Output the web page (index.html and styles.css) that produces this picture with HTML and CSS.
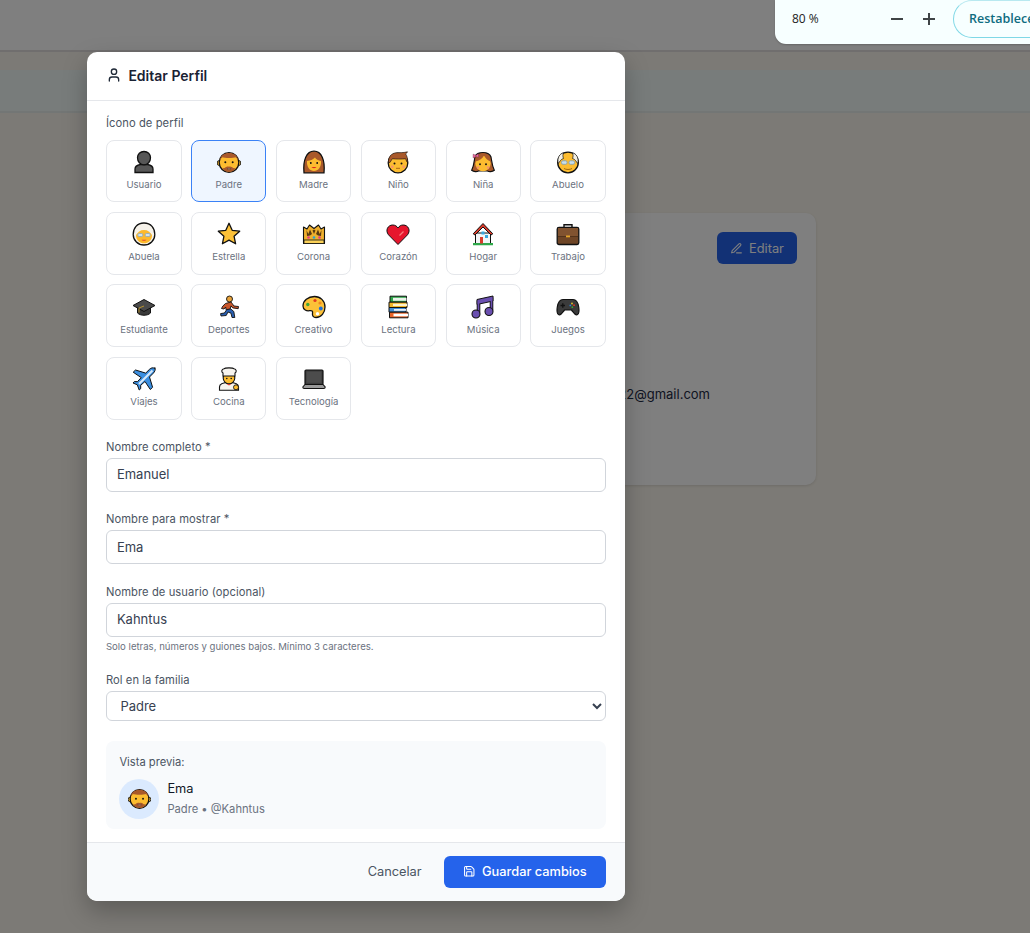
FILE: index.html
```html
<!DOCTYPE html>
<html lang="es">
<head>
<meta charset="utf-8">
<title>Editar Perfil</title>
<link rel="stylesheet" href="styles.css">
</head>
<body>
<svg class="defs" width="0" height="0" aria-hidden="true">
  <symbol id="e-usuario" viewBox="0 0 24 24"><path d="M3 22.500v-3.500c0-2.500 2.500-4 5.500-4.500h7c3 .5 5.500 2 5.500 4.500v3.500z" fill="#575757" stroke="#111" stroke-width="1.300"/><path d="M12 1.500c3.800 0 6.500 2.700 6.500 6.300 0 3.800-2.700 7-6.500 7s-6.500-3.200-6.500-7c0-3.600 2.700-6.300 6.500-6.300z" fill="#575757" stroke="#111" stroke-width="1.300"/></symbol>
  <symbol id="e-padre" viewBox="0 0 24 24"><path d="M2.200 10.500a2 2.500 0 0 0 0 5h19.600a2 2.500 0 0 0 0-5z" fill="#fcbc30" stroke="#111" stroke-width=".9"/><circle cx="12" cy="12.500" r="9.800" fill="#fcbc30" stroke="#111" stroke-width="1.300"/><path d="M2.800 10C3.600 5.300 7 2.900 12 2.900s8.400 2.400 9.200 7.100c-.8-.4-1.300-1.300-1.900-2.700-3.700 1-10.900 1-14.600 0-.6 1.400-1.100 2.300-1.900 2.700z" fill="#a9592b"/><path d="M5.200 18c1.600 2.700 3.900 3.900 6.800 3.900s5.200-1.200 6.800-3.900c-.8.200-1.600.2-2.500 0-1.500-1.300-2.800-1.800-4.300-1.300-1.500-.5-2.800 0-4.300 1.300-.9.200-1.700.2-2.500 0z" fill="#a9592b"/><path d="M10 18.500h4c-.5 1.100-3.500 1.100-4 0z" fill="#f4f4f4" stroke="#3a1a0a" stroke-width=".4"/><circle cx="8.300" cy="12.300" r="1" fill="#111"/><circle cx="15.700" cy="12.300" r="1" fill="#111"/></symbol>
  <symbol id="e-madre" viewBox="0 0 24 24"><path d="M2 22.800C.8 10 4.500 1.200 12 1.200S23.200 10 22 22.800z" fill="#a9592b" stroke="#111" stroke-width="1.300"/><path d="M5 11c3.200-.3 6.300-1.500 8-3.500 1 1.800 3.300 3.200 6 3.500.5 6-2.800 10-7 10S4.500 17 5 11z" fill="#fcbc30"/><path d="M9.600 17h4.800c-.5 1.500-4.300 1.500-4.800 0z" fill="#e0241c"/><circle cx="8.800" cy="13" r=".95" fill="#111"/><circle cx="15.200" cy="13" r=".95" fill="#111"/></symbol>
  <symbol id="e-nino" viewBox="0 0 24 24"><circle cx="12" cy="13" r="9.800" fill="#fcbc30" stroke="#111" stroke-width="1.300"/><path d="M2.400 12.500C2.200 6.800 5.500 3.200 10 2.800c3.500-.3 7 .2 11.500-1-.6 1-1 1.700-1.800 2.200 1.500 2 2.100 5 2 8.500-1-.5-1.500-2.400-2.200-3.800-3.500.5-10 .4-13.200 0-1 1.300-1.500 3-2.400 3.800z" fill="#a9592b" stroke="#111" stroke-width=".6"/><circle cx="8.500" cy="13.500" r="1" fill="#111"/><circle cx="15.500" cy="13.500" r="1" fill="#111"/><path d="M10 18.300h4" stroke="#a8671a" stroke-width="1"/><circle cx="6.200" cy="16.800" r="1.400" fill="#f7956a"/><circle cx="17.800" cy="16.800" r="1.400" fill="#f7956a"/></symbol>
  <symbol id="e-nina" viewBox="0 0 24 24"><path d="M4 6.500C6 1.500 18 1 20 7c.8 4.500 1 8.500 3.300 13.300-2 1.700-5.300 1.700-6.800.7h-9c-1.500 1-4.800 1-6.800-.7C3 15.500 3.200 11 4 6.500z" fill="#a9592b" stroke="#111" stroke-width="1.200"/><circle cx="12" cy="13.500" r="7.700" fill="#fcbc30"/><path d="M4.300 11.500c3.500-.5 7.200-2.800 8.700-6 1.500 2.800 3.700 5.200 6.700 6-.3-5-3.500-8.500-7.700-8.500S4.300 6.500 4.300 11.500z" fill="#a9592b"/><circle cx="9" cy="14.300" r=".95" fill="#111"/><circle cx="15" cy="14.300" r=".95" fill="#111"/><path d="M2.200 4.200l2.800 1.200 2.300-1.700.4 3.600-2.700-.7-2.800 1.300z" fill="#f06ba0" stroke="#7a2a50" stroke-width=".5"/><circle cx="7" cy="17.500" r="1.300" fill="#f7956a"/><circle cx="17" cy="17.500" r="1.300" fill="#f7956a"/></symbol>
  <symbol id="e-abuelo" viewBox="0 0 24 24"><circle cx="12" cy="12.500" r="10.300" fill="#fcbc30" stroke="#111" stroke-width="1.300"/><path d="M2.300 13.500C.8 8 3.800 3.500 7.500 2.800c-.8 2-.8 3.700 0 5.700-2.500.5-3.700 3-5.200 5zM21.700 13.500c1.500-5.500-1.500-10-5.200-10.700.8 2 .8 3.700 0 5.700 2.500.5 3.700 3 5.200 5z" fill="#f3efe4" stroke="#111" stroke-width=".7"/><rect x="5.500" y="10.800" width="5.500" height="3.500" rx="1.400" fill="#c9dfec" stroke="#7d9cb2" stroke-width=".8"/><rect x="13" y="10.800" width="5.500" height="3.500" rx="1.400" fill="#c9dfec" stroke="#7d9cb2" stroke-width=".8"/><path d="M8 18.500c2 1.300 6 1.300 8 0" fill="none" stroke="#a06a10" stroke-width="1"/></symbol>
  <symbol id="e-abuela" viewBox="0 0 24 24"><path d="M12 1C5 1 1.200 6 1.200 12.500c0 6 4.800 10.500 10.800 10.500s10.800-4.500 10.800-10.500C22.800 6 19 1 12 1z" fill="#f6f2ea" stroke="#111" stroke-width="1.300"/><path d="M4 13c2-3 4-5 8-5s6 2 8 5c.3 5-3.600 8.300-8 8.300S3.700 18 4 13z" fill="#fdb92c"/><rect x="5.800" y="11.500" width="5" height="3" rx="1.300" fill="#d3e2ea" stroke="#8aa7ba" stroke-width=".8"/><rect x="13.200" y="11.500" width="5" height="3" rx="1.300" fill="#d3e2ea" stroke="#8aa7ba" stroke-width=".8"/><path d="M9.600 17.800h4.800c-.5 1.400-4.300 1.400-4.800 0z" fill="#e5482c"/></symbol>
  <symbol id="e-estrella" viewBox="0 0 24 24"><path d="M12 1.300l3.200 7 7.500.9-5.600 5.100 1.500 7.500-6.600-3.700-6.600 3.700 1.500-7.500-5.600-5.100 7.500-.9z" fill="#fcc138" stroke="#111" stroke-width="1.300" stroke-linejoin="round"/></symbol>
  <symbol id="e-corona" viewBox="0 0 24 24"><path d="M1.500 5l3.500 2L7.500 3 12 6.500 16.500 3 19 7l3.500-2v16.500h-21z" fill="#efb02e" stroke="#111" stroke-width="1.100" stroke-linejoin="round"/><path d="M4.500 8l1.800 4L8 7.500l2 4.500-2 1.500-3 .5zM19.500 8l-1.800 4L16 7.500 14 12l2 1.500 3 .5zM10.500 8.500L12 12l1.500-3.500L12 7.500z" fill="#5a3a10"/><path d="M2 18h20v3.500H2z" fill="#fbd158" stroke="#111" stroke-width=".8"/><circle cx="6.500" cy="15.500" r="1.300" fill="#e23a8a"/><circle cx="12" cy="15.500" r="1.300" fill="#22a5d8"/><circle cx="17.500" cy="15.500" r="1.300" fill="#e23a8a"/></symbol>
  <symbol id="e-corazon" viewBox="0 0 24 24"><path d="M12 22.500L2.500 12.800C-1 8.500 1.800 3 6.700 3c2.400 0 4.200 1.200 5.300 3 1.100-1.800 2.900-3 5.300-3 4.900 0 7.700 5.500 4.200 9.800z" fill="#e6162d" stroke="#111" stroke-width="1"/><path d="M13.500 13.500l4-4" stroke="#f77a7a" stroke-width="1.300" fill="none"/></symbol>
  <symbol id="e-hogar" viewBox="0 0 24 24"><path d="M4.500 11h15v10.500h-15z" fill="#f3f5f7" stroke="#111" stroke-width="1"/><path d="M12 1.500L2.200 11.800l1.800 1.200L12 5l8 8 1.800-1.200z" fill="#d83a2a" stroke="#111" stroke-width="1" stroke-linejoin="round"/><path d="M2 21h20v2.300H2z" fill="#2fa84a"/><rect x="9" y="15" width="3" height="6.500" fill="#d83a2a"/><rect x="14" y="13" width="3" height="3" fill="#37a7e0"/><rect x="10.500" y="9.500" width="3" height="3" fill="#37a7e0"/></symbol>
  <symbol id="e-trabajo" viewBox="0 0 24 24"><path d="M8 6V2.800h8V6" fill="none" stroke="#111" stroke-width="1.400"/><rect x="1.200" y="5.500" width="21.600" height="17" rx="1.800" fill="#6e4526" stroke="#111" stroke-width="1.300"/><path d="M2 6h20v8H2z" fill="#815330"/><path d="M2 14.500h20" stroke="#4d2f18" stroke-width=".8"/><rect x="10" y="13.500" width="4" height="1.800" fill="#e5a52a"/></symbol>
  <symbol id="e-estudiante" viewBox="0 0 24 24"><path d="M5.500 12v6c3 3 10 3 13 0v-6z" fill="#3a3a3a" stroke="#111" stroke-width="1"/><path d="M12 4.500L1 10.500 12 16.500l11-6z" fill="#4a4a4a" stroke="#111" stroke-width="1" stroke-linejoin="round"/><path d="M12 11l-5 2v4.500" fill="none" stroke="#c49a2a" stroke-width=".9"/></symbol>
  <symbol id="e-deportes" viewBox="0 0 24 24"><circle cx="12.500" cy="4" r="3" fill="#e8a23a" stroke="#111" stroke-width=".9"/><path d="M8.500 8.500l5.500-1.500 3 4 4.500.5-.3 2.200-5.500-.8-1.700-2-1 3.500-4 .3-.3-2.700-1.700 2-2.500-.5 1.300-2.400z" fill="#c9562a" stroke="#111" stroke-width=".9" stroke-linejoin="round"/><path d="M9.800 14.500l4-.5 3 2.500 1 6h-2.800l-1-4.300-3-1.200-1.800 3.500-5.200.5-.4-2.400 3.800-.6z" fill="#2a5fb0" stroke="#111" stroke-width=".9" stroke-linejoin="round"/></symbol>
  <symbol id="e-creativo" viewBox="0 0 24 24"><path d="M12.500 1.500C6 1.500 1 5.800 1 11c0 4 3.800 5.200 6.500 4.700 2.500-.4 3.500.5 3 2.500-.5 2.800 1 4.300 3.500 4.300 5.300 0 9-4.800 9-10.500 0-6.300-4.700-10.500-10.500-10.500z" fill="#fcc138" stroke="#111" stroke-width="1.300"/><circle cx="13" cy="5.500" r="1.600" fill="#e53a20"/><circle cx="18" cy="8" r="1.600" fill="#f08a1c"/><circle cx="5.800" cy="9.500" r="1.700" fill="#3fa535"/><circle cx="18.800" cy="13.500" r="1.900" fill="#1f6fd8"/><circle cx="15.500" cy="18.700" r="1.700" fill="#fff"/></symbol>
  <symbol id="e-lectura" viewBox="0 0 24 24"><path d="M4 1.200h16.500v6H4z" fill="#2fa84a" stroke="#111" stroke-width="1"/><path d="M7 2.800h13.500v3H7z" fill="#eaf3ea"/><path d="M3 7.200h18v5.300H3z" fill="#f0b528" stroke="#111" stroke-width="1"/><path d="M7 8.800h14v2.200H7z" fill="#fdf2cc"/><path d="M3 12.500h17v4.700H3z" fill="#3f8fd8" stroke="#111" stroke-width="1"/><path d="M8 14h12v1.800H8z" fill="#e8f1fa"/><path d="M3.500 17.200h18.500v5.600H3.500z" fill="#e8642a" stroke="#111" stroke-width="1"/><path d="M7.500 18.700H22v2.600H7.500z" fill="#fff"/></symbol>
  <symbol id="e-musica" viewBox="0 0 24 24"><path d="M7.500 5.500v12M20.500 2.500v13" stroke="#111" stroke-width="3.600" fill="none"/><path d="M6 4.500L22 1v5L6 9.500z" fill="#6a4fb0" stroke="#111" stroke-width="1"/><path d="M7.500 5.500v12M20.500 2.500v13" stroke="#6a4fb0" stroke-width="1.700" fill="none"/><circle cx="5" cy="19" r="4" fill="#6a4fb0" stroke="#111" stroke-width="1.100"/><circle cx="18" cy="16.500" r="4" fill="#6a4fb0" stroke="#111" stroke-width="1.100"/></symbol>
  <symbol id="e-juegos" viewBox="0 0 24 24"><path d="M7 4.500h10c3.300 0 5 3.200 5.700 7.500.6 4 .5 7.300-1.900 7.800-2.100.4-3.600-2.800-5.300-4.800h-7c-1.700 2-3.200 5.200-5.300 4.800C.8 19.300.7 16 1.300 12 2 7.700 3.700 4.500 7 4.500z" fill="#3b3b3b" stroke="#111" stroke-width="1.200"/><path d="M4.500 10.500h4.500M6.800 8.300v4.500" stroke="#111" stroke-width="1.300"/><circle cx="16" cy="8.500" r=".9" fill="#e5c12a"/><circle cx="18" cy="10.200" r=".9" fill="#e53a20"/><circle cx="14.300" cy="10.400" r=".9" fill="#2a7fd8"/><circle cx="16.300" cy="12.200" r=".9" fill="#3fa535"/></symbol>
  <symbol id="e-viajes" viewBox="0 0 24 24"><path d="M22.800 1.500c-1.500-1.200-3.800-.7-5.300.8l-3.800 3.800L3.500 3 1.200 5.200l8 5.400-3.700 4H2.300L1 16l4.300 1.800L7.200 23l1.500-1.300v-3.400l4.300-3.800 5.300 8 2.300-2.200-3.100-10.300 3.800-3.800c1.500-1.500 2.500-3.700 1.500-5.700z" fill="#3a8ee0" stroke="#111" stroke-width="1" stroke-linejoin="round"/><path d="M20.500 3.500L7 17" stroke="#d6e9fa" stroke-width="2.200"/></symbol>
  <symbol id="e-cocina" viewBox="0 0 24 24"><path d="M2.500 23.300V20c0-3 3.500-4.500 9.500-4.500s9.500 1.500 9.500 4.500v3.300z" fill="#f7f4ee" stroke="#111" stroke-width="1.100"/><circle cx="12" cy="11" r="5.800" fill="#fcbc30" stroke="#111" stroke-width="1.100"/><path d="M6 9V6C4 5.200 4.500 2 7 1.800c1-1.300 9-1.300 10 0C19.500 2 20 5.200 18 6v3z" fill="#f7f4ee" stroke="#111" stroke-width="1.100"/><path d="M9.500 17l2.500 1.500 2.500-1.500z" fill="#d83a2a"/><circle cx="19" cy="20.300" r="2.500" fill="#fcbc30" stroke="#111" stroke-width=".9"/><circle cx="9.800" cy="11.500" r=".8" fill="#111"/><circle cx="14.200" cy="11.500" r=".8" fill="#111"/></symbol>
  <symbol id="e-tecnologia" viewBox="0 0 24 24"><rect x="3" y="3" width="18" height="14.500" rx="1" fill="#3c3c3c" stroke="#111" stroke-width="1.200"/><rect x="4.600" y="4.600" width="14.800" height="11.200" fill="#4c4c4c"/><path d="M.8 20L3 17.500h18l2.200 2.500c0 1-.5 1.500-1.500 1.500H2.300C1.300 21.500.8 21 .8 20z" fill="#9a9a9a" stroke="#111" stroke-width="1.100"/></symbol>
</svg>

<header class="topbar"></header>
<main class="page">
  <div class="band"></div>
  <section class="card">
    <div class="card-head">
      <button class="edit-btn" type="button">
        <svg class="edit-icon" viewBox="0 0 24 24"><path d="M12 20h9"/><path d="M16.500 3.500a2.120 2.120 0 0 1 3 3L7 19l-4 1 1-4z"/></svg>
        Editar
      </button>
    </div>
    <p class="card-mail">emanuel.kahn22@gmail.com</p>
  </section>
</main>

<div class="overlay"></div>

<aside class="zoom-bubble">
  <span class="zoom-value">80 %</span>
  <span class="zoom-actions">
    <svg class="zoom-icon" viewBox="0 0 14 14"><path d="M1 7h12"/></svg>
    <svg class="zoom-icon" viewBox="0 0 14 14"><path d="M1 7h12M7 1v12"/></svg>
  </span>
  <span class="zoom-reset">Restablecer</span>
</aside>

<div class="modal">
  <div class="modal-head">
    <svg class="head-icon" viewBox="0 0 24 24"><path d="M19 21v-2a4 4 0 0 0-4-4H9a4 4 0 0 0-4 4v2"/><circle cx="12" cy="7" r="4"/></svg>
    <h2 class="modal-title">Editar Perfil</h2>
  </div>
  <form class="modal-body">
    <div class="label label-icons">Ícono de perfil</div>
    <div class="icon-grid">
      <div class="tile"><svg class="emoji"><use href="#e-usuario"/></svg><span>Usuario</span></div>
      <div class="tile tile-active"><svg class="emoji"><use href="#e-padre"/></svg><span>Padre</span></div>
      <div class="tile"><svg class="emoji"><use href="#e-madre"/></svg><span>Madre</span></div>
      <div class="tile"><svg class="emoji"><use href="#e-nino"/></svg><span>Niño</span></div>
      <div class="tile"><svg class="emoji"><use href="#e-nina"/></svg><span>Niña</span></div>
      <div class="tile"><svg class="emoji"><use href="#e-abuelo"/></svg><span>Abuelo</span></div>
      <div class="tile"><svg class="emoji"><use href="#e-abuela"/></svg><span>Abuela</span></div>
      <div class="tile"><svg class="emoji"><use href="#e-estrella"/></svg><span>Estrella</span></div>
      <div class="tile"><svg class="emoji"><use href="#e-corona"/></svg><span>Corona</span></div>
      <div class="tile"><svg class="emoji"><use href="#e-corazon"/></svg><span>Corazón</span></div>
      <div class="tile"><svg class="emoji"><use href="#e-hogar"/></svg><span>Hogar</span></div>
      <div class="tile"><svg class="emoji"><use href="#e-trabajo"/></svg><span>Trabajo</span></div>
      <div class="tile"><svg class="emoji"><use href="#e-estudiante"/></svg><span>Estudiante</span></div>
      <div class="tile"><svg class="emoji"><use href="#e-deportes"/></svg><span>Deportes</span></div>
      <div class="tile"><svg class="emoji"><use href="#e-creativo"/></svg><span>Creativo</span></div>
      <div class="tile"><svg class="emoji"><use href="#e-lectura"/></svg><span>Lectura</span></div>
      <div class="tile"><svg class="emoji"><use href="#e-musica"/></svg><span>Música</span></div>
      <div class="tile"><svg class="emoji"><use href="#e-juegos"/></svg><span>Juegos</span></div>
      <div class="tile"><svg class="emoji"><use href="#e-viajes"/></svg><span>Viajes</span></div>
      <div class="tile"><svg class="emoji"><use href="#e-cocina"/></svg><span>Cocina</span></div>
      <div class="tile"><svg class="emoji"><use href="#e-tecnologia"/></svg><span>Tecnología</span></div>
    </div>

    <label class="field">
      <span class="label">Nombre completo *</span>
      <input class="input" type="text" value="Emanuel">
    </label>
    <label class="field">
      <span class="label">Nombre para mostrar *</span>
      <input class="input" type="text" value="Ema">
    </label>
    <label class="field">
      <span class="label">Nombre de usuario (opcional)</span>
      <input class="input" type="text" value="Kahntus">
      <span class="help">Solo letras, números y guiones bajos. Mínimo 3 caracteres.</span>
    </label>
    <label class="field">
      <span class="label">Rol en la familia</span>
      <select class="select"><option>Padre</option></select>
    </label>

    <div class="preview">
      <div class="preview-title">Vista previa:</div>
      <div class="preview-row">
        <div class="avatar"><svg class="avatar-emoji"><use href="#e-padre"/></svg></div>
        <div class="preview-text">
          <div class="preview-name">Ema</div>
          <div class="preview-sub">Padre • @Kahntus</div>
        </div>
      </div>
    </div>
  </form>
  <div class="modal-foot">
    <button class="btn-cancel" type="button">Cancelar</button>
    <button class="btn-save" type="button">
      <svg class="save-icon" viewBox="0 0 24 24"><path d="M15.200 3a2 2 0 0 1 1.400.6l3.800 3.800a2 2 0 0 1 .6 1.400V19a2 2 0 0 1-2 2H5a2 2 0 0 1-2-2V5a2 2 0 0 1 2-2z"/><path d="M17 21v-7a1 1 0 0 0-1-1H8a1 1 0 0 0-1 1v7"/><path d="M7 3v4a1 1 0 0 0 1 1h7"/></svg>
      Guardar cambios
    </button>
  </div>
</div>
</body>
</html>
```

FILE: styles.css
```css
* { box-sizing: border-box; }
html, body { margin: 0; height: 933px; overflow: hidden; }
body {
  background: #f9f5ec;
  font-family: Inter, "Liberation Sans", sans-serif;
  color: #111827;
  position: relative;
}
.defs { position: absolute; }

.topbar {
  height: 52px;
  background: #ffffff;
  border-bottom: 2px solid #e0dcdc;
}
.page { padding-top: 18px; }
.band { height: 43px; background: #f0f8f7; border-bottom: 2px solid #e6ecea; }
.card {
  width: 602px;
  height: 272px;
  margin: 100px 0 0 214px;
  padding: 19px;
  background: #ffffff;
  border-radius: 10px;
  box-shadow: 0 1px 3px rgba(0, 0, 0, .12);
}
.card-head { display: flex; justify-content: flex-end; }
.edit-btn {
  width: 80px;
  height: 32px;
  border: 0;
  border-radius: 6px;
  background: #2563eb;
  color: #fff;
  font: 400 12.800px Inter, sans-serif;
  display: flex;
  align-items: center;
  justify-content: center;
  gap: 6px;
}
.edit-icon { width: 13px; height: 13px; fill: none; stroke: #fff; stroke-width: 2; stroke-linecap: round; stroke-linejoin: round; }
.card-mail {
  margin: 122px 87px 0 0;
  text-align: right;
  font-size: 13px;
  line-height: 16px;
  color: #1e2a44;
}

.overlay { position: absolute; inset: 0; background: rgba(0, 0, 0, .5); }

.zoom-bubble {
  position: absolute;
  top: 0;
  left: 775px;
  width: 300px;
  height: 44px;
  background: #f7ffff;
  border-bottom-left-radius: 11px;
  display: flex;
  align-items: flex-start;
  font-family: "Open Sans", sans-serif;
  box-shadow: 0 1px 2px rgba(0, 0, 0, .2);
}
.zoom-value { margin: 11px 0 0 17px; width: 98px; font-size: 12px; line-height: 16px; color: #222; }
.zoom-actions { display: flex; gap: 18px; margin-top: 12px; }
.zoom-icon { width: 14px; height: 14px; fill: none; stroke: #3f4446; stroke-width: 2; }
.zoom-reset {
  margin: 0 0 0 17px;
  height: 38px;
  width: 120px;
  padding-left: 15px;
  border: 1px solid #7fd8e6;
  border-top-color: #b8e9f0;
  border-radius: 19px;
  font-size: 12.500px;
  font-weight: 600;
  line-height: 36px;
  color: #0f6c80;
}

.modal {
  position: absolute;
  left: 87.200px;
  top: 52px;
  width: 537.600px;
  height: 849px;
  background: #fff;
  border-radius: 10px;
  overflow: hidden;
  box-shadow: 0 10px 25px rgba(0, 0, 0, .25);
  display: flex;
  flex-direction: column;
}
.modal-head {
  height: 49px;
  padding: 0 19.200px 2px;
  border-bottom: 1px solid #e5e7eb;
  display: flex;
  align-items: center;
  gap: 6px;
}
.head-icon { width: 16px; height: 16px; fill: none; stroke: #1f2937; stroke-width: 2; stroke-linecap: round; stroke-linejoin: round; }
.modal-title { margin: 0; font-size: 14px; font-weight: 600; color: #1a2233; }

.modal-body { flex: 1; padding: 14.500px 19.200px 0; }
.label { display: block; margin-left: -.5px; font-size: 11.200px; line-height: 14px; font-weight: 400; letter-spacing: .08px; color: #4b5563; margin-bottom: 4px; }
.label-icons { margin-bottom: 10px; }

.icon-grid {
  display: grid;
  grid-template-columns: repeat(6, 1fr);
  grid-auto-rows: 62.600px;
  gap: 9.900px 9.600px;
}
.tile {
  border: 1px solid #e5e7eb;
  border-radius: 8px;
  background: #fff;
  display: flex;
  flex-direction: column;
  align-items: center;
  padding-top: 9.200px;
  font-size: 9.600px;
  line-height: 12px;
  color: #6b7280;
}
.tile-active { background: #eff6ff; border-color: #3b82f6; }
.emoji { width: 24px; height: 24px; margin-bottom: 5px; display: block; }

.field { display: block; margin-top: 20.400px; }
.input {
  display: block;
  width: 100%;
  height: 34px;
  padding: 0 9.500px 1.500px;
  border: 1px solid #d1d5db;
  border-radius: 6px;
  font: 400 13px Inter, sans-serif;
  color: #374151;
  background: #fff;
}
.help { display: block; margin-left: -.5px; margin-top: 3px; font-size: 9.600px; line-height: 13px; color: #6b7280; }
.select {
  display: block;
  width: 100%;
  height: 30px;
  padding: 0 9px;
  border: 1px solid #d1d5db;
  border-radius: 6px;
  font: 400 13px Inter, sans-serif;
  color: #374151;
  background: #fff;
}

.preview {
  margin-top: 20px;
  height: 88px;
  padding: 13.500px 13px 0;
  background: #f8fafc;
  border-radius: 8px;
}
.preview-title { font-size: 11.200px; line-height: 14px; color: #4b5563; margin-bottom: 10px; }
.preview-row { display: flex; align-items: center; gap: 8px; }
.avatar {
  width: 40px;
  height: 40px;
  border-radius: 50%;
  background: #dbeafe;
  display: flex;
  align-items: center;
  justify-content: center;
}
.avatar-emoji { width: 23px; height: 23px; }
.preview-name { font-size: 12.800px; line-height: 16px; font-weight: 400; color: #111827; margin-bottom: 5px; }
.preview-sub { font-size: 11.200px; line-height: 14px; color: #6b7280; }

.modal-foot {
  height: 59px;
  border-top: 1px solid #e5e7eb;
  background: #f8fafc;
  padding: 0 19.200px;
  display: flex;
  align-items: center;
  justify-content: flex-end;
  gap: 22px;
}
.btn-cancel { border: 0; background: none; padding: 0 0 2px; font: 400 12.800px Inter, sans-serif; color: #4b5563; }
.btn-save {
  width: 162px;
  height: 32px;
  border: 0;
  border-radius: 6px;
  padding-bottom: 2px;
  background: #2563eb;
  color: #fff;
  font: 450 12.800px Inter, sans-serif;
  display: flex;
  align-items: center;
  justify-content: center;
  gap: 7px;
}
.save-icon { width: 12.500px; height: 12.500px; fill: none; stroke: #fff; stroke-width: 2; stroke-linecap: round; stroke-linejoin: round; }
```
